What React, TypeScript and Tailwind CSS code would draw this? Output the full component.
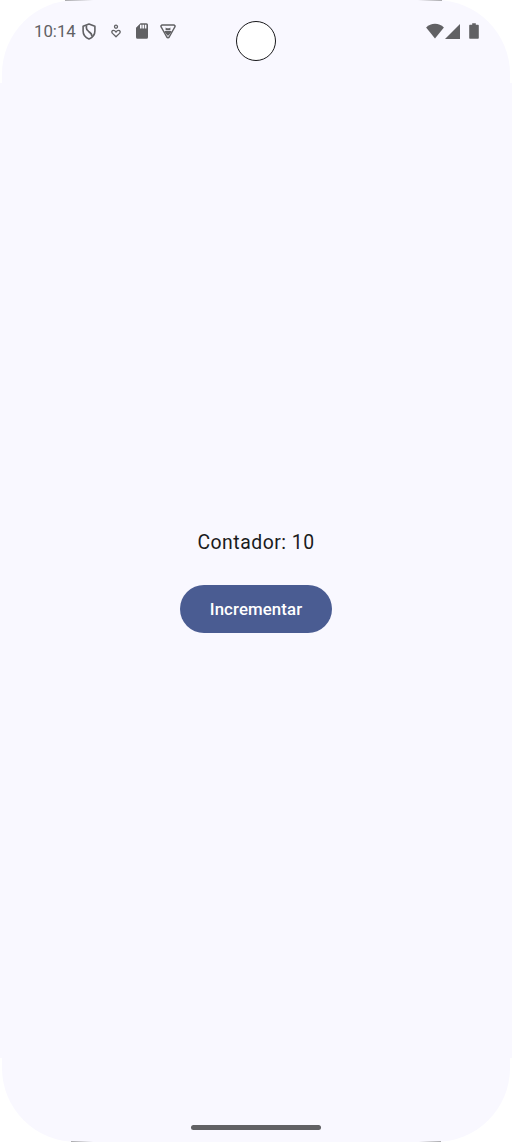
import { useState } from "react";

function ShieldIcon() {
  return (
    <svg viewBox="0 0 14 17" className="h-[17px] w-[14px]" fill="none" stroke="currentColor">
      <path
        d="M7 1 12.900 3.200V8c0 3.900-2.400 6.600-5.900 7.900C3.500 14.600 1.100 11.900 1.100 8V3.200Z"
        strokeWidth="1.600"
        strokeLinejoin="round"
      />
      <path d="M4.400 2.500v2.600c0 1.700.8 2.400 2.200 3.300 2.200 1.300 3.400 2.300 3.400 5" strokeWidth="1.700" />
    </svg>
  );
}

function WellbeingIcon() {
  return (
    <svg viewBox="0 0 10 14" className="h-[14px] w-[10px]" fill="none" stroke="currentColor" strokeWidth="1.300">
      <circle cx="5" cy="2.700" r="1.500" />
      <path
        d="M5 12.800 1.500 9.400C.3 8 .9 6.300 2.500 6.300c1.100 0 1.900.8 2.500 1.800.6-1 1.400-1.800 2.500-1.800 1.600 0 2.200 1.700 1 3.100Z"
        strokeLinejoin="round"
      />
    </svg>
  );
}

function SdCardIcon() {
  return (
    <svg viewBox="0 0 12 16" className="h-4 w-3" fill="currentColor">
      <path
        fillRule="evenodd"
        d="M4.500.3h6A1.500 1.500 0 0 1 12 1.800v12.400a1.500 1.500 0 0 1-1.500 1.500h-9A1.500 1.500 0 0 1 0 14.200V4.800ZM4 1.800v3.600h1.600V1.800Zm2.400 0v3.600H8V1.800Zm2.400 0v3.600h1.600V1.800Z"
      />
    </svg>
  );
}

function TriangleIcon() {
  return (
    <svg viewBox="0 0 16 15" className="h-[15px] w-4" fill="none" stroke="currentColor">
      <path
        d="M2.400 1h11.200c1.200 0 1.800 1 1.200 2L9.200 13c-.6 1-1.800 1-2.400 0L1.200 3C.6 2 1.200 1 2.400 1Z"
        strokeWidth="1.500"
        strokeLinejoin="round"
      />
      <path d="M5.600 3.600 6.800 4.300h2.400l1.200-.7v2.600H5.600ZM4.600 6.900h6.800v1L8.600 11.400H7.400L4.600 7.900Z" fill="currentColor" stroke="none" />
    </svg>
  );
}

function WifiIcon() {
  return (
    <svg viewBox="0 0 18 16" className="h-4 w-[18px]" fill="currentColor">
      <path d="M9 15.500.1 4.500C2.600 2.100 5.600.8 9 .8s6.400 1.300 8.900 3.700Z" />
    </svg>
  );
}

function SignalIcon() {
  return (
    <svg viewBox="0 0 15 15" className="h-[15px] w-[15px]" fill="currentColor">
      <path d="M0 15 15 0v15Z" />
    </svg>
  );
}

function BatteryIcon() {
  return (
    <svg viewBox="0 0 10 16" className="h-4 w-[10px]" fill="currentColor">
      <path d="M3.200.3h3.600v1.400h2c.6 0 1 .4 1 1v12c0 .6-.4 1-1 1H1.200c-.6 0-1-.4-1-1v-12c0-.6.4-1 1-1h2Z" />
    </svg>
  );
}

function StatusBar() {
  return (
    <header className="relative flex h-[62px] items-center justify-between pr-[31px] pl-8 text-[#616164]">
      <div className="flex items-center">
        <span className="w-[48px] text-[16.800px] leading-5">10:14</span>
        <ShieldIcon />
        <span className="ml-[14.500px]">
          <WellbeingIcon />
        </span>
        <span className="ml-[15.500px]">
          <SdCardIcon />
        </span>
        <span className="ml-3">
          <TriangleIcon />
        </span>
      </div>
      <div className="flex items-center">
        <WifiIcon />
        <span className="ml-px">
          <SignalIcon />
        </span>
        <span className="ml-[9px]">
          <BatteryIcon />
        </span>
      </div>
      <div className="absolute top-[21px] left-[234px] size-[39.500px] rounded-full border-[1.500px] border-[#18181b] bg-white" />
    </header>
  );
}

export default function App() {
  const [count, setCount] = useState(10);

  return (
    <div className="relative h-[1142px] w-[512px] bg-[linear-gradient(#fff_83px,#f9f8ff_83px,#f9f8ff_1058px,#fff_1058px)] px-[2px] font-[Roboto,sans-serif]">
      <div className="flex h-full flex-col overflow-hidden rounded-[74px] bg-[#f9f8ff]">
        <StatusBar />
        <main className="flex flex-1 flex-col items-center pt-[466px]">
          <p className="text-[19.400px] leading-[30px] tracking-[0.500px] text-[#1a1b20]">
            Contador: {count}
          </p>
          <button
            type="button"
            onClick={() => setCount(count + 1)}
            className="mt-[27.400px] h-12 w-[151.500px] rounded-full bg-[#4a5c92] pt-px text-[16.800px] font-medium tracking-[0.120px] text-white"
          >
            Incrementar
          </button>
        </main>
        <div className="mb-3 h-[5px] w-[130px] self-center rounded-full bg-[#616164]" />
      </div>
      <span className="absolute top-0 left-[65px] h-px w-7 bg-linear-to-r from-[#aaaaad] to-[#f9f8ff]" />
      <span className="absolute top-0 right-[70px] h-px w-6 bg-linear-to-l from-[#aaaaad] to-[#f9f8ff]" />
      <span className="absolute bottom-0 left-[71px] h-px w-[22px] bg-linear-to-r from-[#aaaaad] to-[#f9f8ff]" />
      <span className="absolute right-[71px] bottom-0 h-px w-[22px] bg-linear-to-l from-[#aaaaad] to-[#f9f8ff]" />
    </div>
  );
}
